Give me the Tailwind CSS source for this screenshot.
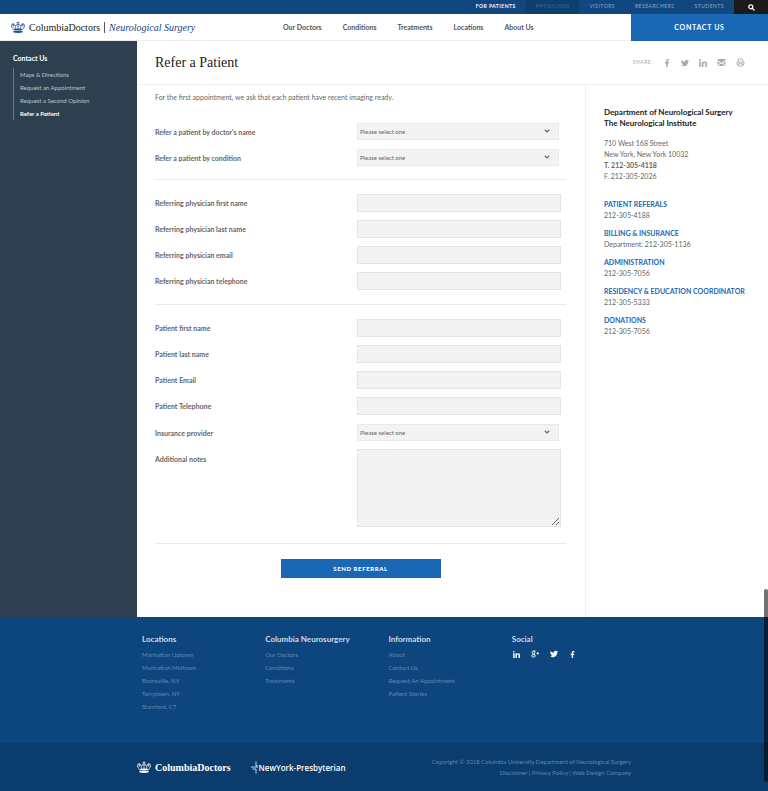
<!DOCTYPE html>
<html lang="en">
<head>
  <meta charset="UTF-8" />
  <meta name="viewport" content="width=device-width, initial-scale=1.0" />
  <title>Refer a Patient - Columbia Neurosurgery</title>
  <script src="https://cdn.jsdelivr.net/npm/@tailwindcss/browser@4"></script>
</head>
<body class="bg-white font-['Lato',sans-serif] text-[7px] leading-[11px] text-[#666]">
  <svg class="hidden">
    <symbol id="crown" viewBox="0 0 28 24">
      <g fill="none" stroke="currentColor" stroke-width="1.600">
        <path d="M5.500 17C1.500 13 0 10 1 7.500C3 5 7 6 8.500 9.500M22.500 17C26.500 13 28 10 27 7.500C25 5 21 6 19.500 9.500" />
        <path d="M14 17V1M11 3.500H17M9.500 16C7 11 9.500 7 14 7C18.500 7 21 11 18.500 16" />
        <path d="M4.500 4V12M2.500 8H8M23.500 4V12M20 8H25.500" stroke-width="1.200" />
      </g>
      <path fill="currentColor" d="M5 16Q14 14 23 16L22.500 18.500Q14 17 5.500 18.500ZM5 19.800Q14 18 23 19.800V23Q14 24.500 5 23Z" />
    </symbol>
    <symbol id="facebook" viewBox="0 0 320 512">
      <path fill="currentColor" d="M279.14 288l14.22-92.66h-88.91v-60.13c0-25.35 12.42-50.06 52.24-50.06h40.42V6.26S260.43 0 225.36 0c-73.22 0-121.08 44.38-121.08 124.72v70.62H22.89V288h81.39v224h100.17V288z" />
    </symbol>
    <symbol id="twitter" viewBox="0 0 24 24">
      <path fill="currentColor" d="M23.95 4.57a10 10 0 01-2.82.77 4.96 4.96 0 002.16-2.72c-.95.55-2 .96-3.13 1.18a4.92 4.92 0 00-8.38 4.48C7.69 8.09 4.07 6.13 1.64 3.16a4.93 4.93 0 001.52 6.57 4.9 4.9 0 01-2.23-.61v.06a4.92 4.92 0 003.95 4.83 5 5 0 01-2.21.08 4.94 4.94 0 004.6 3.42A9.87 9.87 0 010 19.54a13.99 13.99 0 007.55 2.21c9.14 0 14.31-7.72 14.31-14.42 0-.21 0-.42-.02-.63a10 10 0 002.46-2.55z" />
    </symbol>
    <symbol id="linkedin" viewBox="0 0 448 448">
      <path fill="currentColor" d="M100.28 448H7.4V148.9h92.88zM53.79 108.1C24.09 108.1 0 83.5 0 53.8a53.79 53.79 0 01107.58 0c0 29.7-24.1 54.3-53.79 54.3zM447.9 448h-92.68V302.4c0-34.7-.7-79.2-48.29-79.2-48.29 0-55.69 37.7-55.69 76.7V448h-92.78V148.9h89.08v40.8h1.3c12.4-23.5 42.69-48.3 87.88-48.3 94 0 111.28 61.9 111.28 142.3V448z" />
    </symbol>
    <symbol id="google" viewBox="0 0 26 24">
      <g fill="none" stroke="currentColor" stroke-width="3">
        <ellipse cx="8" cy="7" rx="4.500" ry="4.500" />
        <ellipse cx="8" cy="18" rx="6" ry="4" />
        <path d="M8 2.500H15M10 11L12 15M18 10H26M22 6V14" />
      </g>
    </symbol>
    <symbol id="chevron" viewBox="0 0 12 8">
      <path fill="none" stroke="currentColor" stroke-width="2.200" d="M1.500 1.500L6 6L10.500 1.500" />
    </symbol>
  </svg>

  <!-- Top bar -->
  <div class="flex h-[14px] justify-end bg-[#10477f] text-[5px] leading-[13px] tracking-widest text-[#8facca]">
    <a href="#" class="px-[10px] font-bold text-white">FOR PATIENTS</a>
    <a href="#" class="bg-[#0c3e6e] px-[10px] text-[#47709a]">PHYSICIANS</a>
    <a href="#" class="px-[10px]">VISITORS</a>
    <a href="#" class="px-[10px]">RESEARCHERS</a>
    <a href="#" class="px-[10px]">STUDENTS</a>
    <button aria-label="Search" class="flex w-[34px] items-center justify-center bg-[#1b1b1b] text-white">
      <svg class="size-[7px]" viewBox="0 0 14 14" fill="none" stroke="currentColor" stroke-width="2.500"><circle cx="5.500" cy="5.500" r="4" /><path d="M8.500 8.500L13 13" /></svg>
    </button>
  </div>

  <!-- Header -->
  <header class="flex h-[27px] items-center border-b border-[#eee]">
    <a href="#" class="flex w-[283px] items-center pl-[11px] font-['Liberation_Serif',serif] text-[10px] text-[#222]">
      <svg class="mr-1 h-[12px] w-[14px] text-[#1d4f91]"><use href="#crown" /></svg>
      <span>ColumbiaDoctors</span>
      <span class="mx-1 h-[11px] w-px bg-[#555]"></span>
      <span class="italic text-[#12408a]">Neurological Surgery</span>
    </a>
    <nav class="flex flex-1 gap-[21px] font-bold text-[#555]">
      <a href="#">Our Doctors</a>
      <a href="#">Conditions</a>
      <a href="#">Treatments</a>
      <a href="#">Locations</a>
      <a href="#">About Us</a>
    </nav>
    <a href="#" class="flex h-[27px] w-[137px] items-center justify-center bg-[#1a68b5] font-bold tracking-widest text-white">CONTACT US</a>
  </header>

  <div class="flex">
    <!-- Sidebar -->
    <aside class="w-[137px] shrink-0 bg-[#2e4050] px-[13px] pt-3 text-[6px] text-[#bdc5cc]">
      <h2 class="mb-1 text-[7px] font-bold text-white">Contact Us</h2>
      <ul class="border-l border-[#6d7a86] pl-[6px] leading-[13px]">
        <li><a href="#">Maps &amp; Directions</a></li>
        <li><a href="#">Request an Appointment</a></li>
        <li><a href="#">Request a Second Opinion</a></li>
        <li><a href="#" class="font-bold text-white">Refer a Patient</a></li>
      </ul>
    </aside>

    <main class="flex-1">
      <div class="flex h-[44px] items-center justify-between border-b border-[#eee] pr-[23px] pl-[18px]">
        <h1 class="font-['Liberation_Serif',serif] text-[14px] leading-[18px] text-[#222]">Refer a Patient</h1>
        <div class="flex items-center gap-[10px] text-[#aaa]">
          <span class="text-[5px] tracking-widest text-[#aaa]">SHARE:</span>
          <a href="#" aria-label="Facebook"><svg class="size-[8px]"><use href="#facebook" /></svg></a>
          <a href="#" aria-label="Twitter"><svg class="size-[8px]"><use href="#twitter" /></svg></a>
          <a href="#" aria-label="LinkedIn"><svg class="size-[8px]"><use href="#linkedin" /></svg></a>
          <a href="#" aria-label="Email"><svg class="size-[9px]" viewBox="0 0 18 18"><path fill="currentColor" d="M1 2H17V4L9 10L1 4ZM1 6.500L6 10L1 14.500ZM17 6.500L12 10L17 14.500ZM7.500 11L9 12L10.500 11L16 16H2Z" /></svg></a>
          <a href="#" aria-label="Print"><svg class="size-[9px]" viewBox="0 0 18 18" fill="none" stroke="currentColor" stroke-width="1.800"><path d="M4.500 8V2H12L13.500 4V8M4.500 13H2V8H16V13H13.500M4.500 11.500H13.500V16H4.500Z" /></svg></a>
        </div>
      </div>

      <div class="flex">
        <form class="flex-1 pt-[7px] pr-[19px] pb-[39px] pl-[18px]">
          <p class="mb-[20px]">For the first appointment, we ask that each patient have recent imaging ready.</p>

          <div class="flex flex-col gap-[9px] pb-[13px]">
            <div class="flex items-center">
              <label for="doctor" class="w-[202px] pt-px font-bold">Refer a patient by doctor's name</label>
              <div class="relative">
                <select id="doctor" class="block h-[17px] w-[202px] appearance-none border border-[#e9e9e9] bg-[#f3f3f3] px-[2px] text-[6px]"><option>Please select one</option></select>
                <svg class="pointer-events-none absolute top-[6px] right-[9px] h-[4px] w-[6px]"><use href="#chevron" /></svg>
              </div>
            </div>
            <div class="flex items-center">
              <label for="condition" class="w-[202px] pt-px font-bold">Refer a patient by condition</label>
              <div class="relative">
                <select id="condition" class="block h-[17px] w-[202px] appearance-none border border-[#e9e9e9] bg-[#f3f3f3] px-[2px] text-[6px]"><option>Please select one</option></select>
                <svg class="pointer-events-none absolute top-[6px] right-[9px] h-[4px] w-[6px]"><use href="#chevron" /></svg>
              </div>
            </div>
          </div>

          <div class="flex flex-col gap-2 border-t border-[#eaeaea] py-[14px]">
            <div class="flex items-center">
              <label for="ref-first" class="w-[202px] font-bold">Referring physician first name</label>
              <input id="ref-first" type="text" class="h-[18px] w-[204px] border border-[#e4e4e4] bg-[#f3f3f3] px-1" />
            </div>
            <div class="flex items-center">
              <label for="ref-last" class="w-[202px] font-bold">Referring physician last name</label>
              <input id="ref-last" type="text" class="h-[18px] w-[204px] border border-[#e4e4e4] bg-[#f3f3f3] px-1" />
            </div>
            <div class="flex items-center">
              <label for="ref-email" class="w-[202px] font-bold">Referring physician email</label>
              <input id="ref-email" type="email" class="h-[18px] w-[204px] border border-[#e4e4e4] bg-[#f3f3f3] px-1" />
            </div>
            <div class="flex items-center">
              <label for="ref-phone" class="w-[202px] font-bold">Referring physician telephone</label>
              <input id="ref-phone" type="tel" class="h-[18px] w-[204px] border border-[#e4e4e4] bg-[#f3f3f3] px-1" />
            </div>
          </div>

          <div class="flex flex-col gap-2 border-t border-[#eaeaea] pt-[14px] pb-4">
            <div class="flex items-center">
              <label for="first" class="w-[202px] font-bold">Patient first name</label>
              <input id="first" type="text" class="h-[18px] w-[204px] border border-[#e4e4e4] bg-[#f3f3f3] px-1" />
            </div>
            <div class="flex items-center">
              <label for="last" class="w-[202px] font-bold">Patient last name</label>
              <input id="last" type="text" class="h-[18px] w-[204px] border border-[#e4e4e4] bg-[#f3f3f3] px-1" />
            </div>
            <div class="flex items-center">
              <label for="email" class="w-[202px] font-bold">Patient Email</label>
              <input id="email" type="email" class="h-[18px] w-[204px] border border-[#e4e4e4] bg-[#f3f3f3] px-1" />
            </div>
            <div class="flex items-center">
              <label for="phone" class="w-[202px] font-bold">Patient Telephone</label>
              <input id="phone" type="tel" class="h-[18px] w-[204px] border border-[#e4e4e4] bg-[#f3f3f3] px-1" />
            </div>
            <div class="flex items-center pt-px">
              <label for="insurance" class="w-[202px] pt-px font-bold">Insurance provider</label>
              <div class="relative">
                <select id="insurance" class="block h-[17px] w-[202px] appearance-none border border-[#e9e9e9] bg-[#f3f3f3] px-[2px] text-[6px]"><option>Please select one</option></select>
                <svg class="pointer-events-none absolute top-[6px] right-[9px] h-[4px] w-[6px]"><use href="#chevron" /></svg>
              </div>
            </div>
            <div class="flex items-start">
              <label for="notes" class="w-[202px] pt-[5px] font-bold">Additional notes</label>
              <textarea id="notes" class="h-[78px] w-[204px] border border-[#e4e4e4] bg-[#f3f3f3] p-1"></textarea>
            </div>
          </div>

          <div class="flex justify-center border-t border-[#eaeaea] pt-[15px]">
            <button type="submit" class="h-[19px] w-[160px] bg-[#1a68b5] text-[6px] font-black tracking-widest text-white">SEND REFERRAL</button>
          </div>
        </form>

        <!-- Contact details -->
        <aside class="w-[183px] border-l border-[#eee] pt-[22px] pl-[18px]">
          <h3 class="mb-[9px] text-[8px] font-bold text-[#222]">Department of Neurological Surgery<br />The Neurological Institute</h3>
          <p class="mb-[17px]">
            710 West 168 Street<br />
            New York, New York 10032<br />
            <b>T. 212-305-4118</b><br />
            F. 212-305-2026
          </p>
          <div class="flex flex-col gap-[7px]">
            <p><a href="#" class="font-bold text-[#1a68b5]">PATIENT REFERALS</a><br />212-305-4188</p>
            <p><a href="#" class="font-bold text-[#1a68b5]">BILLING &amp; INSURANCE</a><br />Department: 212-305-1136</p>
            <p><a href="#" class="font-bold text-[#1a68b5]">ADMINISTRATION</a><br />212-305-7056</p>
            <p><a href="#" class="font-bold text-[#1a68b5]">RESIDENCY &amp; EDUCATION COORDINATOR</a><br />212-305-5333</p>
            <p><a href="#" class="font-bold text-[#1a68b5]">DONATIONS</a><br />212-305-7056</p>
          </div>
        </aside>
      </div>
    </main>
  </div>

  <!-- Footer -->
  <footer class="bg-[#0d467f] text-[6px] text-[#6188b1]">
    <div class="mx-auto grid min-h-[126px] max-w-[494px] grid-cols-4 gap-1 pt-4 pl-[5px] leading-[13px]">
      <div>
        <h4 class="mb-[2px] text-[8px] font-bold text-[#cfdcea]">Locations</h4>
        <ul>
          <li><a href="#">Manhattan Uptown</a></li>
          <li><a href="#">Manhattan Midtown</a></li>
          <li><a href="#">Bronxville, NY</a></li>
          <li><a href="#">Tarrytown, NY</a></li>
          <li><a href="#">Stamford, CT</a></li>
        </ul>
      </div>
      <div>
        <h4 class="mb-[2px] text-[8px] font-bold text-[#cfdcea]">Columbia Neurosurgery</h4>
        <ul>
          <li><a href="#">Our Doctors</a></li>
          <li><a href="#">Conditions</a></li>
          <li><a href="#">Treatments</a></li>
        </ul>
      </div>
      <div>
        <h4 class="mb-[2px] text-[8px] font-bold text-[#cfdcea]">Information</h4>
        <ul>
          <li><a href="#">About</a></li>
          <li><a href="#">Contact Us</a></li>
          <li><a href="#">Request An Appointment</a></li>
          <li><a href="#">Patient Stories</a></li>
        </ul>
      </div>
      <div>
        <h4 class="mb-[2px] text-[8px] font-bold text-[#cfdcea]">Social</h4>
        <div class="flex h-[12px] items-center gap-[11px] pl-px text-white">
          <a href="#" aria-label="LinkedIn"><svg class="size-[7px]"><use href="#linkedin" /></svg></a>
          <a href="#" aria-label="Google Plus"><svg class="size-[8px]"><use href="#google" /></svg></a>
          <a href="#" aria-label="Twitter"><svg class="size-[8px]"><use href="#twitter" /></svg></a>
          <a href="#" aria-label="Facebook"><svg class="size-[7px]"><use href="#facebook" /></svg></a>
        </div>
      </div>
    </div>
    <div class="bg-[#0a3c6d]">
      <div class="mx-auto flex h-[48px] max-w-[494px] items-center">
        <a href="#" class="flex items-center gap-1 font-['Liberation_Serif',serif] text-[10px] font-bold text-white">
          <svg class="h-[12px] w-[14px]"><use href="#crown" /></svg>
          ColumbiaDoctors
        </a>
        <a href="#" class="ml-5 flex items-center gap-px font-['Open_Sans',sans-serif] text-[8px] font-semibold text-white">
          <svg class="h-[13px] w-[7px]" viewBox="0 0 14 26" fill="none" stroke="currentColor" stroke-width="1.600"><path d="M10 1V10H14M0 12H14M3 16H10V25" /></svg>
          NewYork-Presbyterian
        </a>
        <p class="ml-auto text-right">
          Copyright © 2018 Columbia University Department of Neurological Surgery<br />
          <a href="#">Disclaimer</a> | <a href="#">Privacy Policy</a> | <a href="#">Web Design Company</a>
        </p>
      </div>
    </div>
  </footer>

  <!-- Scroll thumb -->
  <div class="fixed right-0 bottom-[9px] h-[193px] w-[4px] rounded-full bg-black/55"></div>
</body>
</html>
